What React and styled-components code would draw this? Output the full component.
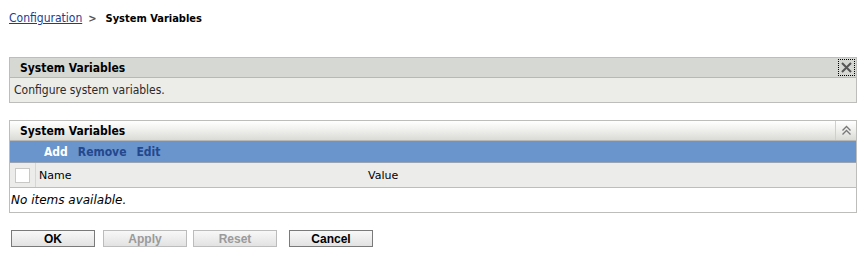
import React from "react";
import styled, { createGlobalStyle } from "styled-components";

const Global = createGlobalStyle`
  html, body {
    margin: 0;
    padding: 0;
    background: #ffffff;
    font-family: "DejaVu Sans Condensed", "DejaVu Sans", sans-serif;
    font-size: 12px;
    color: #000;
  }
`;

const Page = styled.div`
  width: 848px;
  padding: 11px 8px 0 9px;
`;

const Crumbs = styled.div`
  display: flex;
  align-items: center;
  height: 14px;
  gap: 6px;
  & a {
    color: #1d3c94;
    text-decoration: underline;
  }
  & b {
    margin-left: 3px;
    font-weight: bold;
    font-size: 11px;
  }
`;

const Chevron = styled.span`
  color: #555;
  font-weight: bold;
  font-size: 11px;
`;

const Panel = styled.div`
  margin-top: ${(p) => p.$top}px;
  border: 1px solid #bdbdbb;
`;

const PanelHead = styled.div`
  display: flex;
  align-items: center;
  justify-content: space-between;
  height: 19px;
  padding-left: 10px;
  background: ${(p) =>
    p.$gradient
      ? "linear-gradient(#ffffff, #f2f2f0 40%, #dadad6)"
      : "#d6d8d3"};
  border-bottom: 1px solid #b8b8b6;
  font-weight: bold;
  font-size: 12px;
`;

const PanelBody = styled.div`
  background: #ecece9;
  height: 24px;
  display: flex;
  align-items: center;
  padding-left: 4px;
  color: #2a2a2a;
`;

const CloseBtn = styled.button`
  width: 17px;
  height: 17px;
  margin-right: 1px;
  padding: 0;
  border: 1px dotted #000;
  background: transparent;
  display: flex;
  align-items: center;
  justify-content: center;
`;

const CollapseBtn = styled.div`
  width: 20px;
  height: 19px;
  border-left: 1px solid #cfcfcc;
  display: flex;
  align-items: center;
  justify-content: center;
`;

const Toolbar = styled.div`
  background: #6a94cc;
  height: 21px;
  display: flex;
  align-items: center;
  gap: 10px;
  padding-left: 34px;
  font-weight: bold;
  font-size: 12px;
  border-bottom: 1px solid #9aa4b0;
`;

const Tool = styled.span`
  color: ${(p) => (p.$active ? "#ffffff" : "#23488e")};
`;

const HeadRow = styled.div`
  display: grid;
  grid-template-columns: 26px 332px 1fr;
  height: 24px;
  background: #ececea;
  border-bottom: 1px solid #bdbdbb;
  font-size: 11px;
  font-family: "DejaVu Sans", sans-serif;
  & > div {
    display: flex;
    align-items: center;
  }
`;

const CheckCell = styled.div`
  border-right: 1px solid #d6d6d3;
  justify-content: center;
`;

const Box = styled.span`
  width: 13px;
  height: 13px;
  background: #fff;
  border: 1px solid #c8c8c6;
`;

const NameCell = styled.div`
  padding-left: 3px;
`;

const Empty = styled.div`
  height: 24px;
  display: flex;
  align-items: center;
  padding-left: 1px;
  font-family: "DejaVu Sans", sans-serif;
  font-style: italic;
  background: #fff;
`;

const Buttons = styled.div`
  display: flex;
  margin-top: 17px;
  padding-left: 2px;
`;

const Btn = styled.button`
  width: 84px;
  height: 17px;
  margin-right: ${(p) => p.$gap}px;
  padding: 0;
  font-family: "Liberation Sans", Arial, sans-serif;
  font-weight: bold;
  font-size: 12px;
  color: ${(p) => (p.disabled ? "#9a9a9a" : "#000")};
  background: linear-gradient(#f8f8f8, #e2e2e2);
  border: 1px solid ${(p) => (p.disabled ? "#bcbcbc" : "#7a7a7a")};
  border-radius: 0;
`;

export default function App() {
  return (
    <Page>
      <Global />
      <Crumbs>
        <a href="#">Configuration</a>
        <Chevron>&gt;</Chevron>
        <b>System Variables</b>
      </Crumbs>

      <Panel $top={32}>
        <PanelHead>
          <span>System Variables</span>
          <CloseBtn>
            <svg width="13" height="13" viewBox="0 0 13 13">
              <path
                d="M2 2 L11 11 M11 2 L2 11"
                stroke="#555"
                strokeWidth="2"
                fill="none"
              />
            </svg>
          </CloseBtn>
        </PanelHead>
        <PanelBody>Configure system variables.</PanelBody>
      </Panel>

      <Panel $top={17}>
        <PanelHead $gradient>
          <span>System Variables</span>
          <CollapseBtn>
            <svg width="11" height="11" viewBox="0 0 11 11">
              <path
                d="M1.5 5.5 L5.5 1.5 L9.5 5.5 M1.5 9.5 L5.5 5.5 L9.5 9.5"
                stroke="#777"
                strokeWidth="1.3"
                fill="none"
              />
            </svg>
          </CollapseBtn>
        </PanelHead>
        <Toolbar>
          <Tool $active>Add</Tool>
          <Tool>Remove</Tool>
          <Tool>Edit</Tool>
        </Toolbar>
        <HeadRow>
          <CheckCell>
            <Box />
          </CheckCell>
          <NameCell>Name</NameCell>
          <div>Value</div>
        </HeadRow>
        <Empty>No items available.</Empty>
      </Panel>

      <Buttons>
        <Btn $gap={8}>OK</Btn>
        <Btn $gap={6} disabled>Apply</Btn>
        <Btn $gap={12} disabled>Reset</Btn>
        <Btn $gap={0}>Cancel</Btn>
      </Buttons>
    </Page>
  );
}
